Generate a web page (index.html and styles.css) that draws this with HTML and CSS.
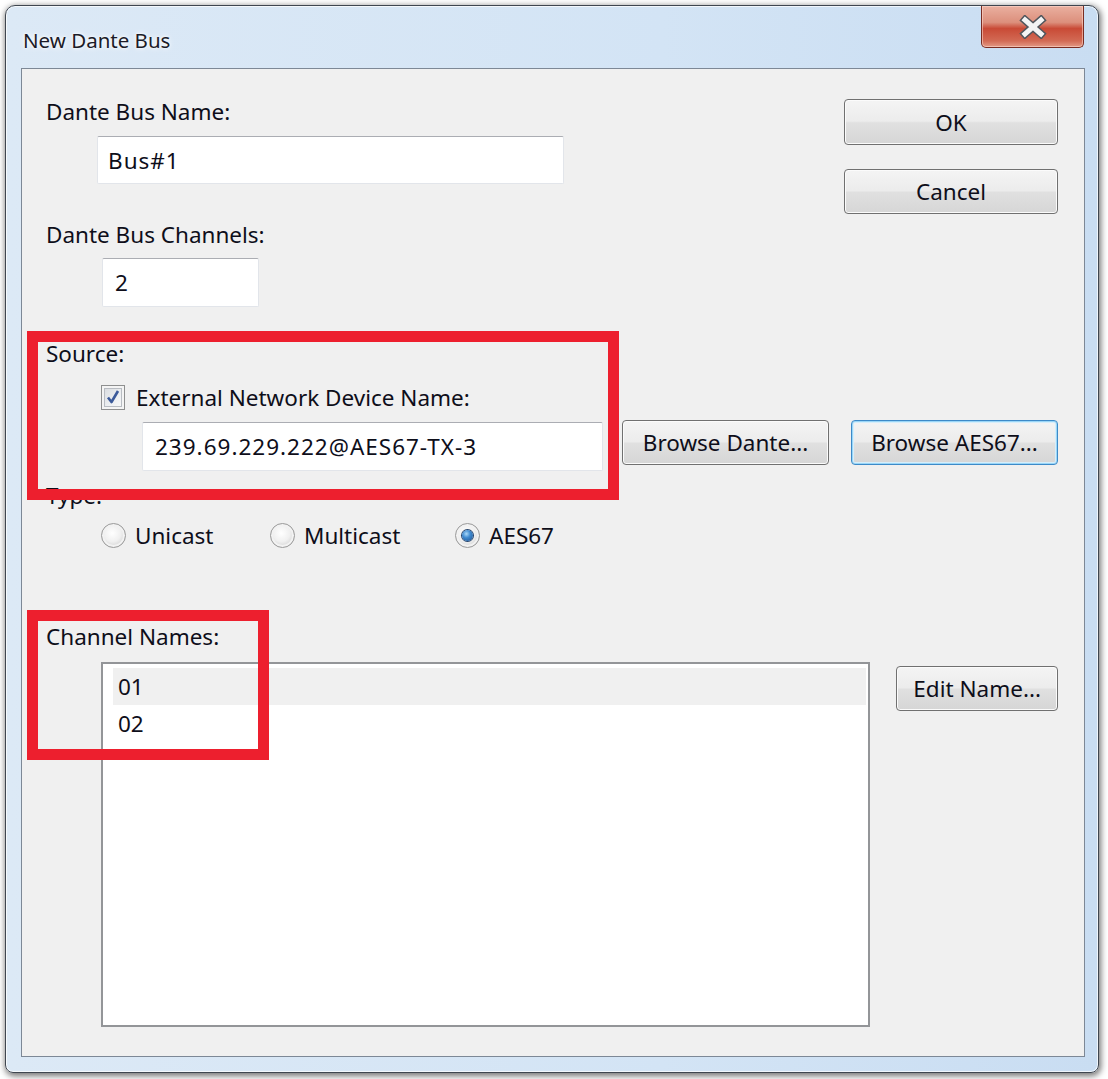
FILE: index.html
```html
<!DOCTYPE html>
<html>
<head>
<meta charset="utf-8">
<title>New Dante Bus</title>
<link rel="stylesheet" href="styles.css">
</head>
<body>
<div class="window">
  <div class="titlebar">
    <span class="title">New Dante Bus</span>
    <div class="close">
      <svg width="30" height="24" viewBox="0 0 30 24">
        <path d="M7 5 L23 19 M23 5 L7 19" stroke="#50555c" stroke-width="8" stroke-linecap="square" fill="none"/>
        <path d="M7 5 L23 19 M23 5 L7 19" stroke="#f4f4f4" stroke-width="5" stroke-linecap="square" fill="none"/>
      </svg>
    </div>
  </div>
  <div class="client">
    <div class="top">
      <div class="top-left">
        <div class="label">Dante Bus Name:</div>
        <div class="field field-name">Bus#1</div>
        <div class="label label-ch">Dante Bus Channels:</div>
        <div class="field field-ch">2</div>
      </div>
      <div class="top-right">
        <div class="btn btn-ok">OK</div>
        <div class="btn btn-cancel">Cancel</div>
      </div>
    </div>

    <div class="label label-source">Source:</div>
    <div class="check-row">
      <span class="checkbox">
        <svg width="16" height="16" viewBox="0 0 16 16">
          <path d="M3 8.5 L6.5 13 L13 2" stroke="#3b5a9a" stroke-width="2.6" fill="none" stroke-linejoin="round"/>
        </svg>
      </span>
      <span class="check-label">External Network Device Name:</span>
    </div>
    <div class="device-row">
      <div class="field field-device">239.69.229.222@AES67-TX-3</div>
      <div class="btn btn-dante">Browse Dante...</div>
      <div class="btn btn-aes focus">Browse AES67...</div>
    </div>

    <div class="label label-type">Type:</div>
    <div class="radio-row">
      <div class="radio-item r1"><span class="radio"></span><span>Unicast</span></div>
      <div class="radio-item r2"><span class="radio"></span><span>Multicast</span></div>
      <div class="radio-item"><span class="radio checked"></span><span>AES67</span></div>
    </div>

    <div class="label label-names">Channel Names:</div>
    <div class="list-row">
      <div class="listbox">
        <div class="item selected">01</div>
        <div class="item">02</div>
      </div>
      <div class="btn btn-edit">Edit Name...</div>
    </div>
  </div>
</div>
<div class="mark mark-source"></div>
<div class="mark mark-names"></div>
</body>
</html>
```

FILE: styles.css
```css
* { box-sizing: border-box; }

html, body {
  margin: 0;
  padding: 0;
}

body {
  width: 1108px;
  height: 1079px;
  overflow: hidden;
  position: relative;
  background: #ffffff;
  font-family: "Noto Sans", "Segoe UI", sans-serif;
  font-size: 22.5px;
  color: #0e0e1a;
}

.window {
  margin: 5px 0 0 5px;
  width: 1094px;
  height: 1068px;
  border: 1px solid #3f4650;
  border-radius: 10px 10px 8px 8px;
  background: linear-gradient(to right, #dce9f6 0%, #d3e4f5 60%, #c9ddf2 100%);
  box-shadow: 1px 2px 6px 1px rgba(0, 0, 0, 0.55), inset 0 0 0 1px rgba(255, 255, 255, 0.7);
  padding: 0 13px 15px 15px;
  display: flex;
  flex-direction: column;
}

.titlebar {
  height: 62px;
  display: flex;
  justify-content: space-between;
  align-items: flex-start;
  padding-left: 2px;
}

.title {
  font-size: 20.5px;
  line-height: 22px;
  margin-top: 23px;
  color: #1b1b28;
  text-shadow: 0 0 6px #ffffff, 0 0 3px #ffffff;
}

.close {
  width: 103px;
  height: 42px;
  margin-right: 1px;
  border: 1px solid #7a2d22;
  border-top: none;
  border-radius: 0 0 5px 5px;
  background: linear-gradient(#eab0a0 0%, #dc8f7c 40%, #c94a36 55%, #d26a54 85%, #e39a86 100%);
  box-shadow: inset 0 0 0 1px rgba(255, 220, 210, 0.55);
  display: flex;
  align-items: center;
  justify-content: center;
}

.client {
  height: 989px;
  border: 1px solid #7d8896;
  background: #f0f0f0;
  padding: 29px 26px 0 24px;
}

.top {
  display: flex;
  justify-content: space-between;
}

.label {
  height: 28px;
  line-height: 28px;
  white-space: nowrap;
}

.field {
  background: #ffffff;
  border: 1px solid #e2e5ea;
  border-top-color: #abadb3;
  border-radius: 2px;
  display: flex;
  align-items: center;
  white-space: nowrap;
  letter-spacing: 1px;
}

.field-name {
  margin: 10px 0 0 51px;
  width: 467px;
  height: 48px;
  padding-left: 10px;
}

.label-ch {
  margin-top: 37px;
}

.field-ch {
  margin: 9px 0 0 56px;
  width: 157px;
  height: 49px;
  padding-left: 12px;
}

.top-right {
  width: 214px;
  display: flex;
  flex-direction: column;
  padding-top: 1px;
}

.btn {
  border: 1px solid #707070;
  border-radius: 4px;
  background: linear-gradient(#f4f4f4 0%, #ececec 48%, #e0e0e0 52%, #d6d6d6 100%);
  box-shadow: inset 0 0 0 1px #fbfbfb;
  display: flex;
  align-items: center;
  justify-content: center;
  white-space: nowrap;
}

.btn-ok {
  height: 46px;
}

.btn-cancel {
  height: 45px;
  margin-top: 24px;
}

.label-source {
  margin-top: 33px;
}

.check-row {
  margin-top: 15px;
  height: 28px;
  padding-left: 55px;
  display: flex;
  align-items: center;
}

.checkbox {
  width: 24px;
  height: 25px;
  border: 1px solid #8e8f8f;
  background: linear-gradient(135deg, #d5d8dc 0%, #eef0f2 60%, #fbfbfc 100%);
  box-shadow: inset 0 0 0 2px #f4f4f4, inset 0 0 0 3px #b8bcc2;
  display: flex;
  align-items: center;
  justify-content: center;
  margin-right: 11px;
}

.device-row {
  margin-top: 9px;
  display: flex;
  align-items: flex-start;
}

.field-device {
  margin: 2px 0 0 96px;
  width: 461px;
  height: 49px;
  padding-left: 12px;
}

.btn-dante {
  margin-left: 19px;
  width: 207px;
  height: 45px;
}

.btn-aes {
  margin-left: 22px;
  width: 207px;
  height: 45px;
}

.btn.focus {
  border-color: #3d8ac8;
  box-shadow: inset 0 0 0 1px #9ad6f7, inset 0 0 0 2px #d6eefb;
}

.label-type {
  margin-top: 11px;
}

.radio-row {
  margin-top: 11px;
  height: 28px;
  padding-left: 55px;
  display: flex;
  align-items: center;
}

.radio-item {
  display: flex;
  align-items: center;
}

.r1 { width: 169px; }
.r2 { width: 185px; }

.radio {
  width: 25px;
  height: 25px;
  border-radius: 50%;
  border: 1px solid #9a9a9a;
  background: radial-gradient(circle at 45% 40%, #ffffff 0%, #f0f0f0 45%, #d4d4d4 75%, #c4c4c4 100%);
  box-shadow: inset 0 0 0 2px #f2f2f2;
  margin-right: 9px;
  display: flex;
  align-items: center;
  justify-content: center;
}

.radio.checked::after {
  content: "";
  width: 11px;
  height: 11px;
  border-radius: 50%;
  background: radial-gradient(circle at 40% 35%, #a9d8f8 0%, #3f8ad0 40%, #1d4f8c 100%);
  box-shadow: 0 0 0 1px #23426b;
}

.label-names {
  margin-top: 74px;
}

.list-row {
  margin-top: 11px;
  display: flex;
  align-items: flex-start;
}

.listbox {
  margin-left: 55px;
  width: 771px;
  height: 365px;
  border: 2px solid #939598;
  background: #ffffff;
  padding: 4px 2px 0 10px;
}

.item {
  height: 37px;
  line-height: 37px;
  padding-left: 5px;
}

.item.selected {
  background: #f0f0f0;
}

.btn-edit {
  margin: 4px 0 0 26px;
  width: 162px;
  height: 45px;
}

.mark {
  position: absolute;
  border: 11px solid #ed1f2e;
}

.mark-source {
  left: 27px;
  top: 331px;
  width: 592px;
  height: 169px;
}

.mark-names {
  left: 27px;
  top: 610px;
  width: 242px;
  height: 150px;
}
```
